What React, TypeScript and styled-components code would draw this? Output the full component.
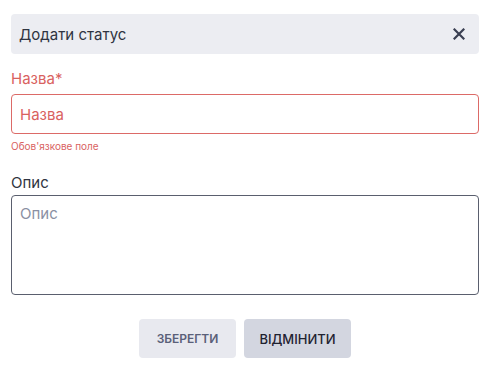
import React, { useState } from 'react';
import styled, { createGlobalStyle } from 'styled-components';

const GlobalStyle = createGlobalStyle`
  html, body {
    margin: 0;
    padding: 0;
    background: #ffffff;
    font-family: 'Inter', 'Noto Sans', sans-serif;
  }
  * {
    box-sizing: border-box;
  }
`;

const Modal = styled.div`
  width: 492px;
  padding: 14px 13px 0 11px;
  display: flex;
  flex-direction: column;
`;

const Header = styled.div`
  height: 40px;
  background: #ecedf2;
  border-radius: 4px;
  display: flex;
  align-items: center;
  justify-content: space-between;
  padding: 0 14px 0 8px;
  margin-bottom: 15px;
`;

const Title = styled.span`
  font-size: 15px;
  color: #2f3441;
`;

const CloseButton = styled.button`
  border: none;
  background: transparent;
  padding: 0;
  display: flex;
  align-items: center;
  cursor: pointer;
`;

const Field = styled.div<{ $gap?: number }>`
  display: flex;
  flex-direction: column;
  margin-bottom: ${(p) => p.$gap ?? 0}px;
`;

const Label = styled.label<{ $error?: boolean }>`
  font-size: 15px;
  line-height: 20px;
  color: ${(p) => (p.$error ? '#d9625f' : '#2f3441')};
  margin-bottom: ${(p) => (p.$error ? 5 : 2)}px;
`;

const Input = styled.input<{ $error?: boolean }>`
  height: 40px;
  width: 100%;
  border: 1px solid ${(p) => (p.$error ? '#dc6a67' : '#5a5f6e')};
  border-radius: 4px;
  padding: 0 8px;
  font-family: inherit;
  font-size: 15px;
  outline: none;
  color: #2f3441;

  &::placeholder {
    color: ${(p) => (p.$error ? '#d9625f' : '#8a90a3')};
  }
`;

const TextArea = styled.textarea`
  height: 100px;
  width: 100%;
  border: 1px solid #5a5f6e;
  border-radius: 4px;
  padding: 8px 8px;
  font-family: inherit;
  font-size: 15px;
  outline: none;
  resize: none;
  color: #2f3441;

  &::placeholder {
    color: #8a90a3;
  }
`;

const ErrorText = styled.span`
  font-size: 10px;
  line-height: 14px;
  color: #d9625f;
  margin-top: 5px;
`;

const Actions = styled.div`
  display: flex;
  justify-content: center;
  gap: 8px;
  margin-top: 24px;
`;

const Button = styled.button<{ $variant: 'save' | 'cancel' }>`
  height: 39px;
  width: ${(p) => (p.$variant === 'save' ? 97 : 107)}px;
  padding: 0;
  border: none;
  border-radius: 4px;
  font-family: inherit;
  font-size: ${(p) => (p.$variant === 'save' ? 12 : 13)}px;
  font-weight: ${(p) => (p.$variant === 'save' ? 600 : 500)};
  cursor: pointer;
  background: ${(p) => (p.$variant === 'save' ? '#e8e9ef' : '#d3d6e0')};
  color: ${(p) => (p.$variant === 'save' ? '#5a6079' : '#1f2230')};
`;

const App: React.FC = () => {
  const [name, setName] = useState('');
  const [description, setDescription] = useState('');

  return (
    <>
      <GlobalStyle />
      <Modal>
        <Header>
          <Title>Додати статус</Title>
          <CloseButton aria-label="close">
            <svg width="12" height="12" viewBox="0 0 12 12">
              <path d="M1.5 1.5 L10.5 10.5 M10.5 1.5 L1.5 10.5" stroke="#3a3f52" strokeWidth="2.2" strokeLinecap="square" />
            </svg>
          </CloseButton>
        </Header>

        <Field $gap={20}>
          <Label $error>Назва*</Label>
          <Input $error placeholder="Назва" value={name} onChange={(e) => setName(e.target.value)} />
          <ErrorText>Обов'язкове поле</ErrorText>
        </Field>

        <Field>
          <Label>Опис</Label>
          <TextArea placeholder="Опис" value={description} onChange={(e) => setDescription(e.target.value)} />
        </Field>

        <Actions>
          <Button $variant="save">ЗБЕРЕГТИ</Button>
          <Button $variant="cancel">ВІДМІНИТИ</Button>
        </Actions>
      </Modal>
    </>
  );
};

export default App;
